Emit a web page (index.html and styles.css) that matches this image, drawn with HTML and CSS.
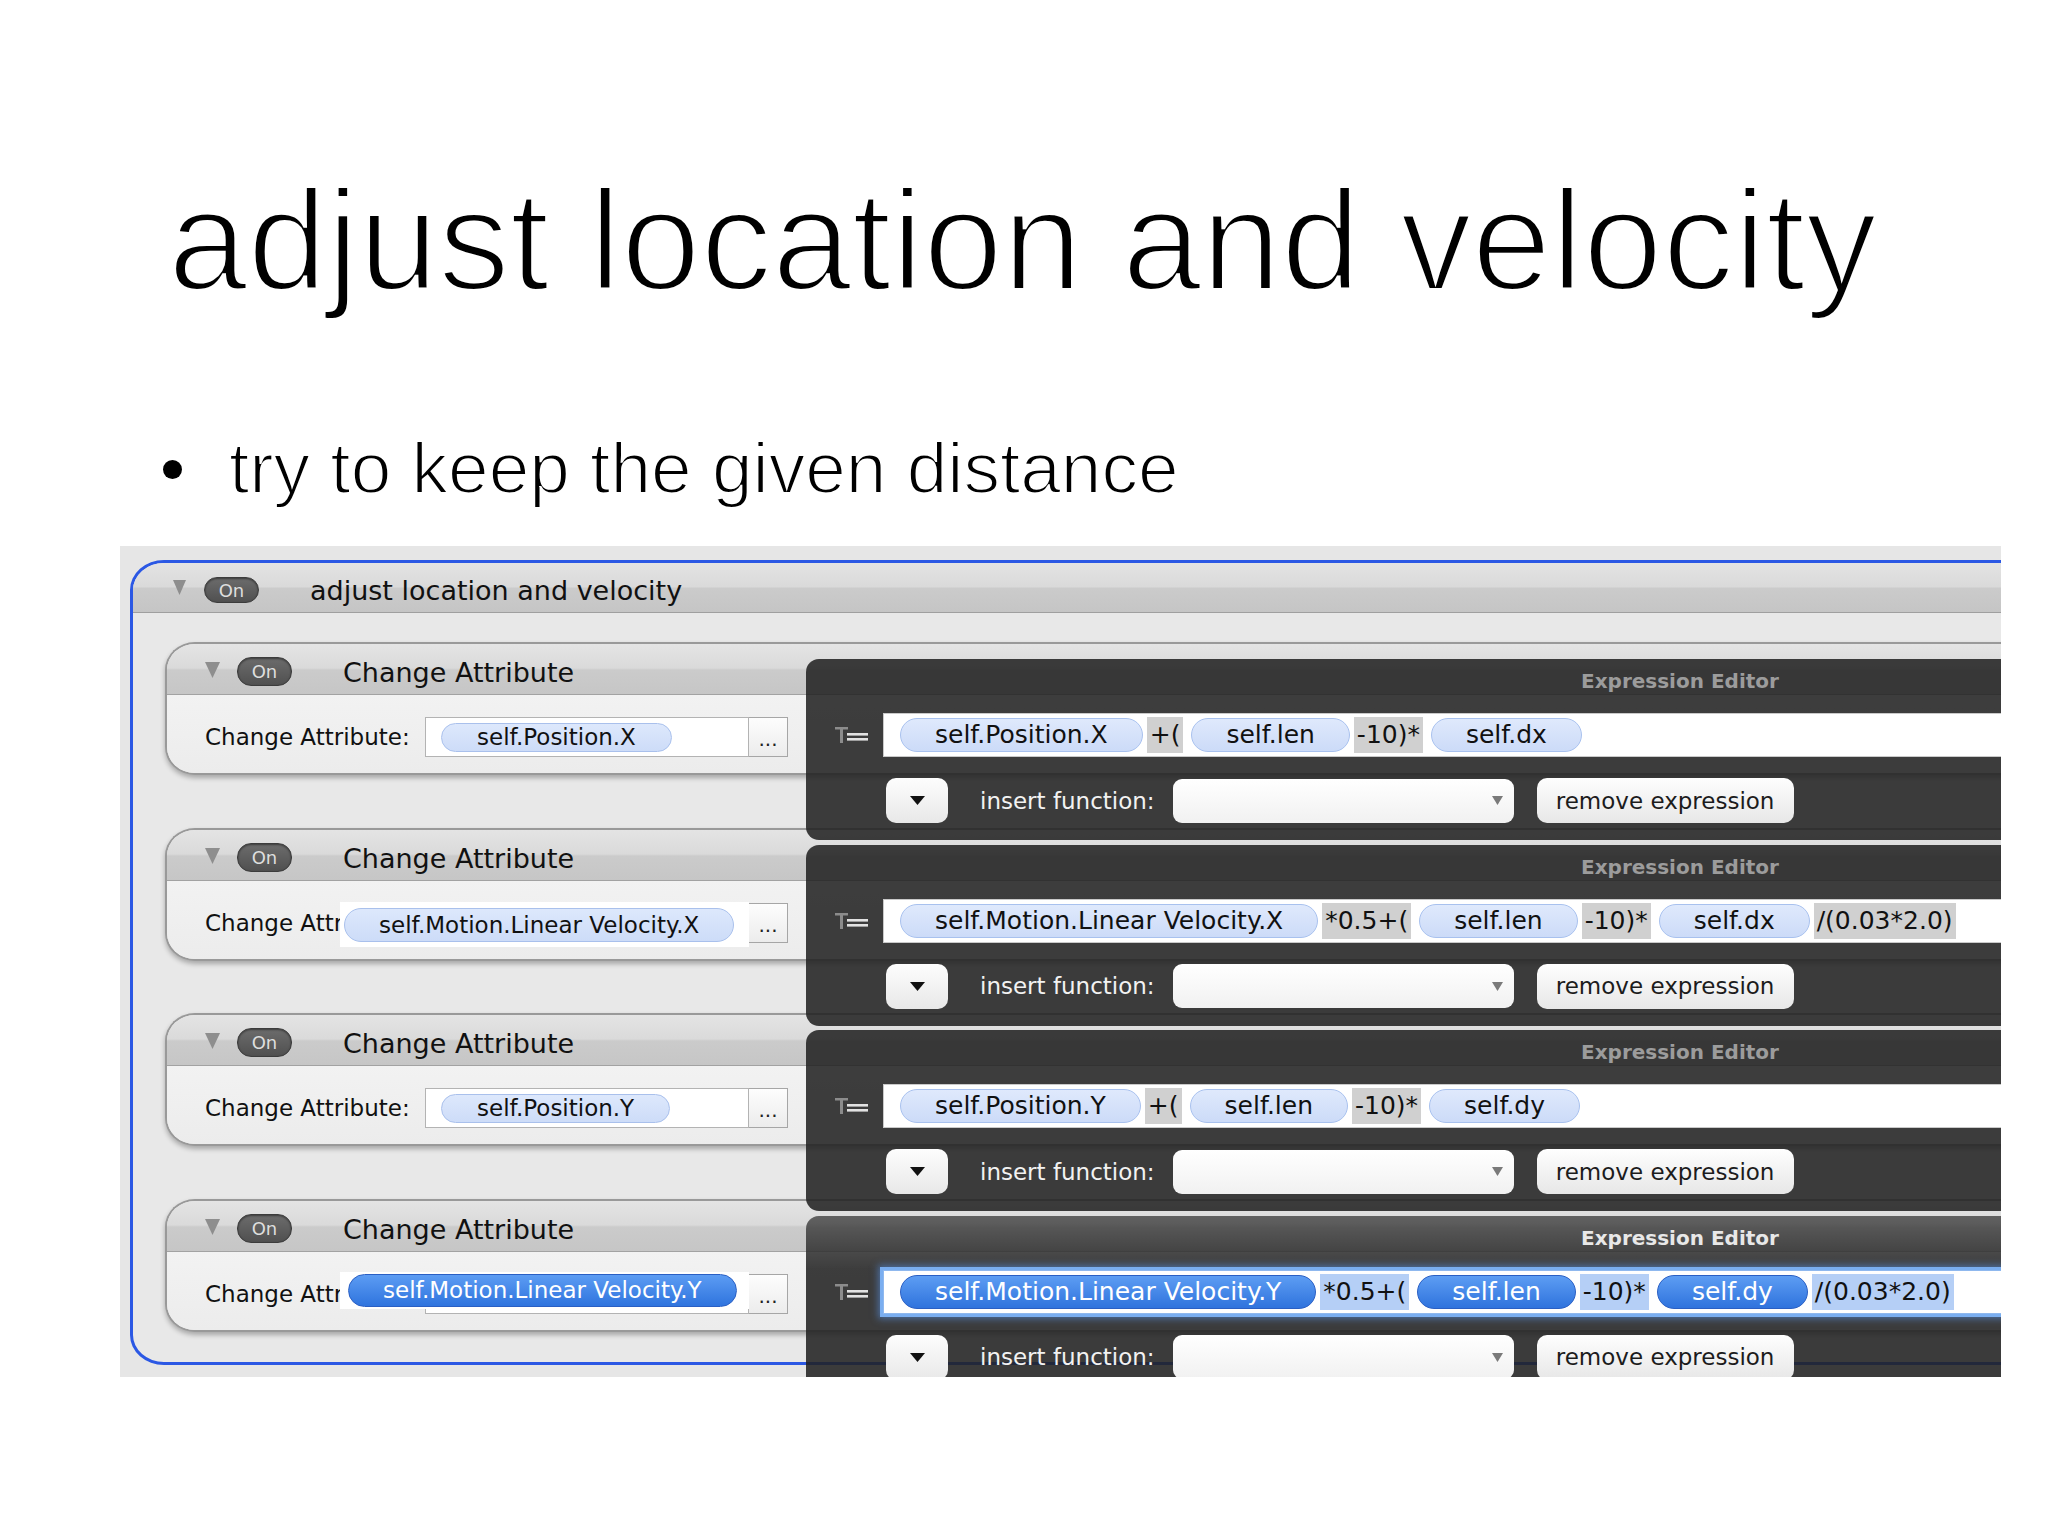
FILE: index.html
```html
<!DOCTYPE html>
<html>
<head>
<meta charset="utf-8">
<title>adjust location and velocity</title>
<link rel="stylesheet" href="styles.css">
</head>
<body>
<div class="slide">
  <h1 class="title">adjust location and velocity</h1>
  <ul class="bullets">
    <li><span class="dot"></span><span class="btext">try to keep the given distance</span></li>
  </ul>

  <div class="shot">
    <div class="group">
      <div class="ghead">
        <svg class="tri gtri" viewBox="0 0 13 15"><polygon points="0,0 13,0 6.5,15" fill="#8e8e8e"/></svg>
        <span class="on gon">On</span>
        <span class="htext">adjust location and velocity</span>
      </div>
      <div class="gbody">

        <!-- row 1 -->
        <div class="row">
          <div class="card">
            <div class="chead">
              <svg class="tri ctri" viewBox="0 0 15 16"><polygon points="0,0 15,0 7.5,16" fill="#8e8e8e"/></svg>
              <span class="on">On</span>
              <span class="htext">Change Attribute</span>
            </div>
            <div class="cbody">
              <span class="label">Change Attribute:</span>
              <div class="field"><span class="cpill">self.Position.X</span></div>
              <span class="more">...</span>
            </div>
          </div>
          <div class="editor">
            <div class="etitle">Expression Editor</div>
            <div class="erow">
              <svg class="ticon" viewBox="0 0 34 16"><rect x="0" y="0" width="13" height="2.5" fill="#8c8c8c"/><rect x="5" y="0" width="3" height="16" fill="#8c8c8c"/><rect x="12" y="6" width="21" height="2.6" fill="#e2e2e2"/><rect x="12" y="11" width="21" height="2.6" fill="#e2e2e2"/></svg>
              <div class="efield">
                <span class="epill">self.Position.X</span><span class="op">+(</span><span class="epill">self.len</span><span class="op">-10)*</span><span class="epill">self.dx</span>
              </div>
            </div>
            <div class="ectrl">
              <span class="dd"><svg viewBox="0 0 15 9" width="15" height="9"><polygon points="0,0 15,0 7.5,9" fill="#111"/></svg></span>
              <span class="ins">insert function:</span>
              <span class="sel"><svg viewBox="0 0 11 9" width="11" height="9"><polygon points="0,0 11,0 5.5,9" fill="#7a7a7a"/></svg></span>
              <span class="btn">remove expression</span>
            </div>
          </div>
        </div>

        <!-- row 2 -->
        <div class="row">
          <div class="card">
            <div class="chead">
              <svg class="tri ctri" viewBox="0 0 15 16"><polygon points="0,0 15,0 7.5,16" fill="#8e8e8e"/></svg>
              <span class="on">On</span>
              <span class="htext">Change Attribute</span>
            </div>
            <div class="cbody">
              <span class="label short">Change Attr</span>
              <div class="dragwrap">
                <div class="field base"></div>
                <div class="drag d2"><span class="cpill wide">self.Motion.Linear Velocity.X</span></div>
              </div>
              <span class="more">...</span>
            </div>
          </div>
          <div class="editor">
            <div class="etitle">Expression Editor</div>
            <div class="erow">
              <svg class="ticon" viewBox="0 0 34 16"><rect x="0" y="0" width="13" height="2.5" fill="#8c8c8c"/><rect x="5" y="0" width="3" height="16" fill="#8c8c8c"/><rect x="12" y="6" width="21" height="2.6" fill="#e2e2e2"/><rect x="12" y="11" width="21" height="2.6" fill="#e2e2e2"/></svg>
              <div class="efield">
                <span class="epill">self.Motion.Linear Velocity.X</span><span class="op">*0.5+(</span><span class="epill">self.len</span><span class="op">-10)*</span><span class="epill">self.dx</span><span class="op">/(0.03*2.0)</span>
              </div>
            </div>
            <div class="ectrl">
              <span class="dd"><svg viewBox="0 0 15 9" width="15" height="9"><polygon points="0,0 15,0 7.5,9" fill="#111"/></svg></span>
              <span class="ins">insert function:</span>
              <span class="sel"><svg viewBox="0 0 11 9" width="11" height="9"><polygon points="0,0 11,0 5.5,9" fill="#7a7a7a"/></svg></span>
              <span class="btn">remove expression</span>
            </div>
          </div>
        </div>

        <!-- row 3 -->
        <div class="row">
          <div class="card">
            <div class="chead">
              <svg class="tri ctri" viewBox="0 0 15 16"><polygon points="0,0 15,0 7.5,16" fill="#8e8e8e"/></svg>
              <span class="on">On</span>
              <span class="htext">Change Attribute</span>
            </div>
            <div class="cbody">
              <span class="label">Change Attribute:</span>
              <div class="field"><span class="cpill">self.Position.Y</span></div>
              <span class="more">...</span>
            </div>
          </div>
          <div class="editor">
            <div class="etitle">Expression Editor</div>
            <div class="erow">
              <svg class="ticon" viewBox="0 0 34 16"><rect x="0" y="0" width="13" height="2.5" fill="#8c8c8c"/><rect x="5" y="0" width="3" height="16" fill="#8c8c8c"/><rect x="12" y="6" width="21" height="2.6" fill="#e2e2e2"/><rect x="12" y="11" width="21" height="2.6" fill="#e2e2e2"/></svg>
              <div class="efield">
                <span class="epill">self.Position.Y</span><span class="op">+(</span><span class="epill">self.len</span><span class="op">-10)*</span><span class="epill">self.dy</span>
              </div>
            </div>
            <div class="ectrl">
              <span class="dd"><svg viewBox="0 0 15 9" width="15" height="9"><polygon points="0,0 15,0 7.5,9" fill="#111"/></svg></span>
              <span class="ins">insert function:</span>
              <span class="sel"><svg viewBox="0 0 11 9" width="11" height="9"><polygon points="0,0 11,0 5.5,9" fill="#7a7a7a"/></svg></span>
              <span class="btn">remove expression</span>
            </div>
          </div>
        </div>

        <!-- row 4 -->
        <div class="row">
          <div class="card">
            <div class="chead">
              <svg class="tri ctri" viewBox="0 0 15 16"><polygon points="0,0 15,0 7.5,16" fill="#8e8e8e"/></svg>
              <span class="on">On</span>
              <span class="htext">Change Attribute</span>
            </div>
            <div class="cbody">
              <span class="label short">Change Attr</span>
              <div class="dragwrap">
                <div class="field base"></div>
                <div class="drag d4"><span class="cpill wide hot">self.Motion.Linear Velocity.Y</span></div>
              </div>
              <span class="more">...</span>
            </div>
          </div>
          <div class="editor active">
            <div class="etitle">Expression Editor</div>
            <div class="erow">
              <svg class="ticon" viewBox="0 0 34 16"><rect x="0" y="0" width="13" height="2.5" fill="#8c8c8c"/><rect x="5" y="0" width="3" height="16" fill="#8c8c8c"/><rect x="12" y="6" width="21" height="2.6" fill="#e2e2e2"/><rect x="12" y="11" width="21" height="2.6" fill="#e2e2e2"/></svg>
              <div class="efield focus">
                <span class="epill hot">self.Motion.Linear Velocity.Y</span><span class="op hot">*0.5+(</span><span class="epill hot">self.len</span><span class="op hot">-10)*</span><span class="epill hot">self.dy</span><span class="op hot">/(0.03*2.0)</span>
              </div>
            </div>
            <div class="ectrl">
              <span class="dd"><svg viewBox="0 0 15 9" width="15" height="9"><polygon points="0,0 15,0 7.5,9" fill="#111"/></svg></span>
              <span class="ins">insert function:</span>
              <span class="sel"><svg viewBox="0 0 11 9" width="11" height="9"><polygon points="0,0 11,0 5.5,9" fill="#7a7a7a"/></svg></span>
              <span class="btn">remove expression</span>
            </div>
          </div>
        </div>

      </div>
    </div>
  </div>
</div>
</body>
</html>
```

FILE: styles.css
```css
html, body {
  margin: 0;
  padding: 0;
}
body {
  width: 2048px;
  height: 1536px;
  overflow: hidden;
  background: #ffffff;
  font-family: "Liberation Sans", Arial, sans-serif;
  color: #000;
}

.slide {
  padding-top: 169px;
}

.title {
  margin: 0 0 0 168px;
  font-size: 143px;
  line-height: 143px;
  font-weight: 300;
  white-space: nowrap;
  color: #000;
  -webkit-text-stroke: 4px #ffffff;
}

.bullets {
  list-style: none;
  margin: 119px 0 0 0;
  padding: 0 0 0 163px;
  font-size: 73px;
  line-height: 74px;
}
.bullets li {
  display: flex;
  align-items: flex-start;
}
.dot {
  width: 19px;
  height: 19px;
  border-radius: 50%;
  background: #000;
  margin-top: 29px;
  margin-right: 47px;
  flex: none;
}
.btext {
  white-space: nowrap;
  -webkit-text-stroke: 2px #ffffff;
}

/* ---------- screenshot ---------- */
.shot {
  margin: 41px 0 0 120px;
  width: 1881px;
  height: 831px;
  box-sizing: border-box;
  padding: 14px 0 0 10px;
  overflow: hidden;
  background: #e6e6e6;
  font-family: "DejaVu Sans", "Liberation Sans", sans-serif;
  color: #111;
}

.group {
  width: 1950px;
  height: 805px;
  box-sizing: border-box;
  border: 3px solid #2b58e4;
  border-radius: 34px 0 0 34px / 30px 0 0 30px;
  background: #e8e8e8;
}

.ghead {
  height: 50px;
  box-sizing: border-box;
  border-bottom: 1px solid #9f9f9f;
  border-radius: 31px 0 0 0 / 27px 0 0 0;
  background: linear-gradient(#e3e3e3 0%, #dadada 48%, #cbcbcb 52%, #c5c5c5 100%);
  display: flex;
  align-items: flex-start;
  padding: 12px 0 0 40px;
}

.tri {
  flex: none;
  display: block;
}
.gtri {
  width: 13px;
  height: 15px;
  margin-top: 5px;
  margin-right: 18px;
}
.ctri {
  width: 15px;
  height: 16px;
  margin-top: 5px;
  margin-right: 17px;
}

.on {
  flex: none;
  width: 55px;
  height: 29px;
  box-sizing: border-box;
  border-radius: 14px;
  border: 1px solid #3c3c3c;
  background: linear-gradient(#6c6c6c, #505050);
  box-shadow: inset 0 1px 2px rgba(0, 0, 0, 0.45);
  color: #dedede;
  font-size: 18px;
  display: flex;
  align-items: center;
  justify-content: center;
  margin-right: 51px;
}
.gon {
  height: 26px;
  margin-top: 2px;
  border-radius: 13px;
}

.htext {
  font-size: 27px;
  white-space: nowrap;
  color: #111;
}

.gbody {
  padding-top: 29px;
}

.row {
  display: grid;
  grid-template-rows: 185.5px;
  height: 185.5px;
}

.card {
  grid-area: 1 / 1;
  align-self: start;
  margin-left: 32px;
  height: 133px;
  box-sizing: border-box;
  border: 2px solid #999999;
  border-right: none;
  border-radius: 30px 0 0 30px / 28px 0 0 28px;
  background: #efefef;
  box-shadow: 0 3px 5px rgba(0, 0, 0, 0.28);
  overflow: hidden;
}

.chead {
  height: 51px;
  box-sizing: border-box;
  border-bottom: 1px solid #a2a2a2;
  background: linear-gradient(#e4e4e4 0%, #dadada 48%, #cbcbcb 52%, #c6c6c6 100%);
  display: flex;
  align-items: flex-start;
  padding: 13px 0 0 38px;
}

.cbody {
  height: 78px;
  box-sizing: border-box;
  padding: 6px 0 0 38px;
  display: flex;
  align-items: center;
  background: linear-gradient(#f2f2f2, #ececec);
}

.label {
  flex: none;
  width: 220px;
  font-size: 23px;
  white-space: nowrap;
  overflow: hidden;
  color: #111;
}
.label.short {
  width: 135px;
}

.field {
  flex: none;
  width: 324px;
  height: 40px;
  box-sizing: border-box;
  background: #ffffff;
  border: 1px solid #b3b3b3;
  display: flex;
  align-items: center;
  padding-left: 15px;
}

.cpill {
  height: 29px;
  box-sizing: border-box;
  padding: 0 35px;
  border-radius: 15px;
  border: 1px solid #a9c0ec;
  background: linear-gradient(#dde8fc, #cddcf8);
  font-size: 23px;
  line-height: 27px;
  white-space: nowrap;
  color: #111;
}
.cpill.wide {
  padding: 0 34px;
  height: 34px;
  line-height: 32px;
  border-radius: 17px;
}
.cpill.hot {
  height: 33px;
  line-height: 31px;
  background: linear-gradient(#5c9cf3, #2f74de);
  border-color: #2a5fc4;
  color: #ffffff;
}

.dragwrap {
  flex: none;
  width: 409px;
  display: grid;
}
.dragwrap .field {
  grid-area: 1 / 1;
  margin-left: 85px;
  align-self: center;
}
.drag {
  grid-area: 1 / 1;
  align-self: center;
  background: #ffffff;
  display: flex;
  align-items: center;
  padding-left: 4px;
}
.drag.d2 {
  height: 45px;
  margin-top: 4px;
}
.drag.d4 {
  height: 37px;
  margin-top: -7px;
  padding-left: 8px;
}

.more {
  flex: none;
  width: 39px;
  height: 40px;
  box-sizing: border-box;
  border: 1px solid #a6a6a6;
  border-left: none;
  background: linear-gradient(#fdfdfd, #ececec);
  font-size: 20px;
  line-height: 20px;
  display: flex;
  justify-content: center;
  align-items: flex-end;
  padding-bottom: 7px;
  color: #222;
}

/* ---------- expression editor ---------- */
.editor {
  grid-area: 1 / 1;
  align-self: start;
  z-index: 2;
  margin-left: 673px;
  margin-top: 17px;
  height: 181px;
  border-radius: 13px 0 0 13px;
  background: rgba(33, 33, 33, 0.87);
  overflow: hidden;
}

.etitle {
  height: 53px;
  box-sizing: border-box;
  padding: 10px 0 0 775px;
  font-size: 20px;
  font-weight: bold;
  color: #9c9c9c;
  white-space: nowrap;
}
.editor.active .etitle {
  background: linear-gradient(rgba(255, 255, 255, 0.2), rgba(255, 255, 255, 0.06) 70%, rgba(255, 255, 255, 0));
  color: #e8e8e8;
}

.erow {
  height: 46px;
  display: flex;
  align-items: center;
  padding-left: 29px;
}
.ticon {
  flex: none;
  width: 34px;
  height: 16px;
  margin-right: 14px;
}

.efield {
  flex: 1;
  height: 44px;
  box-sizing: border-box;
  background: #ffffff;
  border: 1px solid #c9c9c9;
  display: flex;
  align-items: center;
  padding-left: 16px;
}
.efield.focus {
  border-color: #8fb8ee;
  box-shadow: 0 0 0 3px #7aaef0, 0 0 7px 5px rgba(90, 150, 235, 0.55);
}

.epill {
  flex: none;
  height: 34px;
  box-sizing: border-box;
  padding: 0 34px;
  border-radius: 17px;
  border: 1px solid #a8c1ee;
  background: linear-gradient(#dfe9fc, #ccdbf8);
  font-size: 25px;
  line-height: 32px;
  white-space: nowrap;
  color: #111;
}
.epill.hot {
  background: linear-gradient(#5d9df3, #2f73dd);
  border-color: #2a5fc4;
  color: #ffffff;
}

.op {
  flex: none;
  height: 36px;
  box-sizing: border-box;
  padding: 0 3px;
  margin: 0 8px 0 4px;
  background: #d0d0d0;
  font-size: 25px;
  line-height: 36px;
  white-space: nowrap;
  color: #111;
}
.op.hot {
  background: #b5cff6;
}

.ectrl {
  height: 45px;
  margin-top: 20px;
  display: flex;
  align-items: center;
  padding-left: 80px;
}
.dd {
  flex: none;
  width: 62px;
  height: 45px;
  border-radius: 10px;
  background: linear-gradient(#fdfdfd, #e8e8e8);
  display: flex;
  align-items: center;
  justify-content: center;
  margin-right: 32px;
}
.ins {
  flex: none;
  font-size: 23px;
  color: #f2f2f2;
  white-space: nowrap;
  margin-right: 18px;
}
.sel {
  flex: none;
  width: 341px;
  height: 44px;
  box-sizing: border-box;
  border-radius: 9px;
  background: linear-gradient(#ffffff, #f1f1f1);
  display: flex;
  align-items: center;
  justify-content: flex-end;
  padding-right: 11px;
  margin-right: 23px;
}
.btn {
  flex: none;
  width: 257px;
  height: 45px;
  border-radius: 10px;
  background: linear-gradient(#fefefe, #e7e7e7);
  display: flex;
  align-items: center;
  justify-content: center;
  font-size: 23px;
  color: #1c1c1c;
  white-space: nowrap;
}
```
